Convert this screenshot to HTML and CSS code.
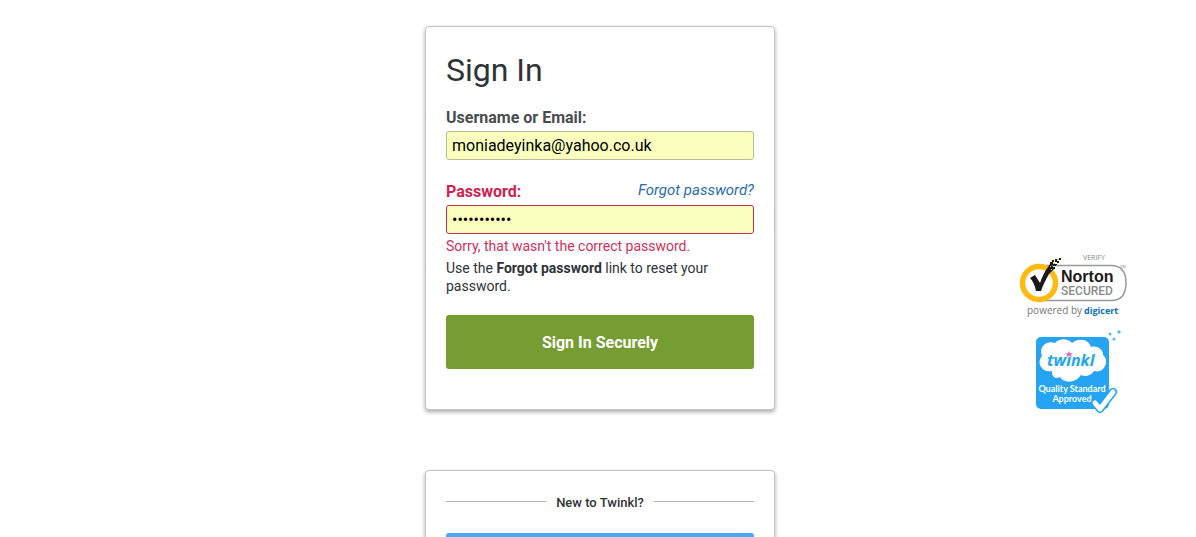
FILE: index.html
```html
<!DOCTYPE html>
<html lang="en">
<head>
<meta charset="utf-8">
<title>Sign In</title>
<link rel="stylesheet" href="styles.css">
</head>
<body>
<div class="page">
  <main class="column">
    <section class="card">
      <h1 class="title">Sign In</h1>
      <form class="form">
        <label class="label" for="user">Username or Email:</label>
        <input class="input" id="user" type="text" value="moniadeyinka@yahoo.co.uk">
        <div class="label-row">
          <label class="label label-error" for="pass">Password:</label>
          <a class="forgot" href="#">Forgot password?</a>
        </div>
        <input class="input input-error" id="pass" type="password" value="abcdefghijk">
        <p class="error">Sorry, that wasn't the correct password.</p>
        <p class="hint">Use the <strong>Forgot password</strong> link to reset your password.</p>
        <button class="submit" type="button">Sign In Securely</button>
      </form>
    </section>
    <section class="card">
      <h2 class="divider">New to Twinkl?</h2>
      <button class="join" type="button" aria-label="Join"></button>
    </section>
  </main>
  <aside class="badges">
    <svg class="norton" viewBox="0 0 125 72" role="img" aria-label="Norton Secured">
      <path d="M29 15.500H101Q116 15.500 116 33Q116 50.500 101 50.500H29" fill="#fff" stroke="#999" stroke-width="1.500"/>
      <circle cx="29" cy="33" r="16.500" fill="#fff" stroke="#fdbb11" stroke-width="5.500"/>
      <path d="M20 28L25 25L30 33C32 27 35 21 38 17L40 14L43 16L42 18L44 19L41 22L39 24C36 29 33 35 31 41L26 41C25 36 23 31 20 28Z" fill="#1b1918"/>
      <path d="M40 12h3v3h-3zM42 10h2v2h-2zM43 14h3v2h-3zM45 9h2v3h-2zM47 11h2v2h-2zM49 8h2v2h-2zM42 17h3v2h-3zM46 14h1v1h-1z" fill="#1b1918"/>
      <path d="M40 16h1v1h-1zM43 13h2v1h-2zM47 9h2v1h-2zM41 19h1v1h-1z" fill="#fdbb11"/>
      <text x="73" y="10" class="t-verify">VERIFY</text>
      <text x="110" y="18" class="t-tm">TM</text>
      <text x="51" y="32" class="t-norton">Norton</text>
      <text x="51" y="45" class="t-secured">SECURED</text>
      <text x="17" y="64" class="t-powered">powered by</text>
      <text x="74" y="64" class="t-digicert">digicert</text>
    </svg>
    <svg class="twinkl" viewBox="0 0 105 95" role="img" aria-label="Twinkl Quality Standard Approved">
      <rect x="11" y="12" width="73" height="72" rx="5" fill="#25a4f4"/>
      <path d="M27 46C17 48 11 38 17 31C13 22 22 15 30 18C35 12 44 14 47 18C55 12 64 15 66 22C73 20 79 26 78 30C85 36 79 49 69 46C66 51 60 52 56 50C50 59 38 58 35 52C31 55 26 51 27 46Z" fill="#fff"/>
      <text x="22" y="41" class="t-twinkl">twınkl</text>
      <path d="M44 26l1 2h2l-1 2 1 2-3-1-2 1v-2l-1-2h2z" fill="#e86cc0"/>
      <text x="47" y="67" class="t-quality">Quality Standard</text>
      <text x="47" y="77" class="t-quality">Approved</text>
      <path d="M70 78L75 84L88 67" fill="none" stroke="#25a4f4" stroke-width="8" stroke-linecap="round" stroke-linejoin="round"/>
      <path d="M70 78L75 84L88 67" fill="none" stroke="#fff" stroke-width="5" stroke-linecap="round" stroke-linejoin="round"/>
      <circle cx="85" cy="9" r="1.500" fill="#58b9ed"/>
      <circle cx="94" cy="7" r="1.700" fill="#58b9ed"/>
      <circle cx="89" cy="14" r="1.500" fill="#58b9ed"/>
    </svg>
  </aside>
</div>
</body>
</html>
```
FILE: styles.css
```css
* { box-sizing: border-box; }
body {
  margin: 0;
  height: 100vh;
  overflow: hidden;
  background: #fff;
  color: #303336;
  font-family: Roboto, "Liberation Sans", sans-serif;
}
.page {
  display: grid;
  grid-template-columns: 1fr minmax(0, 350px) 1fr;
  padding: 26px 0 0 4px;
}
.column {
  grid-column: 2;
  display: flex;
  flex-direction: column;
  gap: 60px;
}
.card {
  padding: 23px 20px 40px;
  border: 1px solid #c4c4c4;
  border-radius: 4px;
  background: #fff;
  box-shadow: 0 2px 4px rgba(0, 0, 0, 0.35);
}
.title {
  margin: 0 0 18px;
  font-size: 32px;
  line-height: 40px;
  font-weight: 400;
}
.form { display: flex; flex-direction: column; }
.label {
  font-size: 16px;
  line-height: 20px;
  font-weight: 700;
  color: #494c4f;
}
.label-error { color: #d0214f; }
.input {
  width: 100%;
  height: 29px;
  margin-top: 3px;
  padding: 0 5px;
  border: 1px solid #b9bc9a;
  border-radius: 3px;
  background: #faffbd;
  color: #000;
  font: 400 16px Roboto, "Liberation Sans", sans-serif;
}
.input-error { border-color: #c0304a; }
.label-row {
  display: flex;
  justify-content: space-between;
  margin-top: 22px;
}
.forgot {
  color: #2a6cad;
  font-size: 15px;
  line-height: 16px;
  font-style: italic;
  text-decoration: none;
}
.error, .hint {
  margin: 4px 0 0;
  font-size: 14px;
  line-height: 18px;
}
.error { margin-top: 3px; color: #d0305a; }
.submit {
  height: 54px;
  margin-top: 20px;
  border: 0;
  border-radius: 3px;
  background: #759d32;
  color: #fff;
  font: 700 16px Roboto, "Liberation Sans", sans-serif;
}
.divider {
  display: flex;
  align-items: center;
  gap: 10px;
  margin: 0 0 21px;
  font-size: 13px;
  line-height: 18px;
  font-weight: 500;
}
.divider::before, .divider::after {
  content: "";
  flex: 1;
  height: 1px;
  margin-bottom: 3px;
  background: #b4b4b4;
}
.join {
  display: block;
  width: 100%;
  height: 54px;
  border: 0;
  border-radius: 3px;
  background: #45a8fb;
}
.badges {
  display: flex;
  flex-direction: column;
  align-items: flex-end;
  gap: 3px;
  padding: 224px 61px 0 0;
}
.norton { width: 125px; height: 72px; }
.twinkl { width: 105px; height: 95px; margin-right: 5px; }
.t-verify { font: 7px "Open Sans", sans-serif; fill: #888; }
.t-tm { font: 4px "Open Sans", sans-serif; fill: #888; }
.t-norton { font: 700 16px "Liberation Sans", sans-serif; fill: #1b1918; }
.t-secured { font: 500 12px Roboto, sans-serif; fill: #8a8a8a; }
.t-powered { font: 10px "Open Sans", sans-serif; fill: #777; }
.t-digicert { font: 700 9px "Open Sans", sans-serif; fill: #0b6cb8; }
.t-twinkl { font: italic 700 16px "Noto Sans", sans-serif; fill: #25a4f4; }
.t-quality { font: 700 9px Lato, sans-serif; fill: #fff; text-anchor: middle; }
```
